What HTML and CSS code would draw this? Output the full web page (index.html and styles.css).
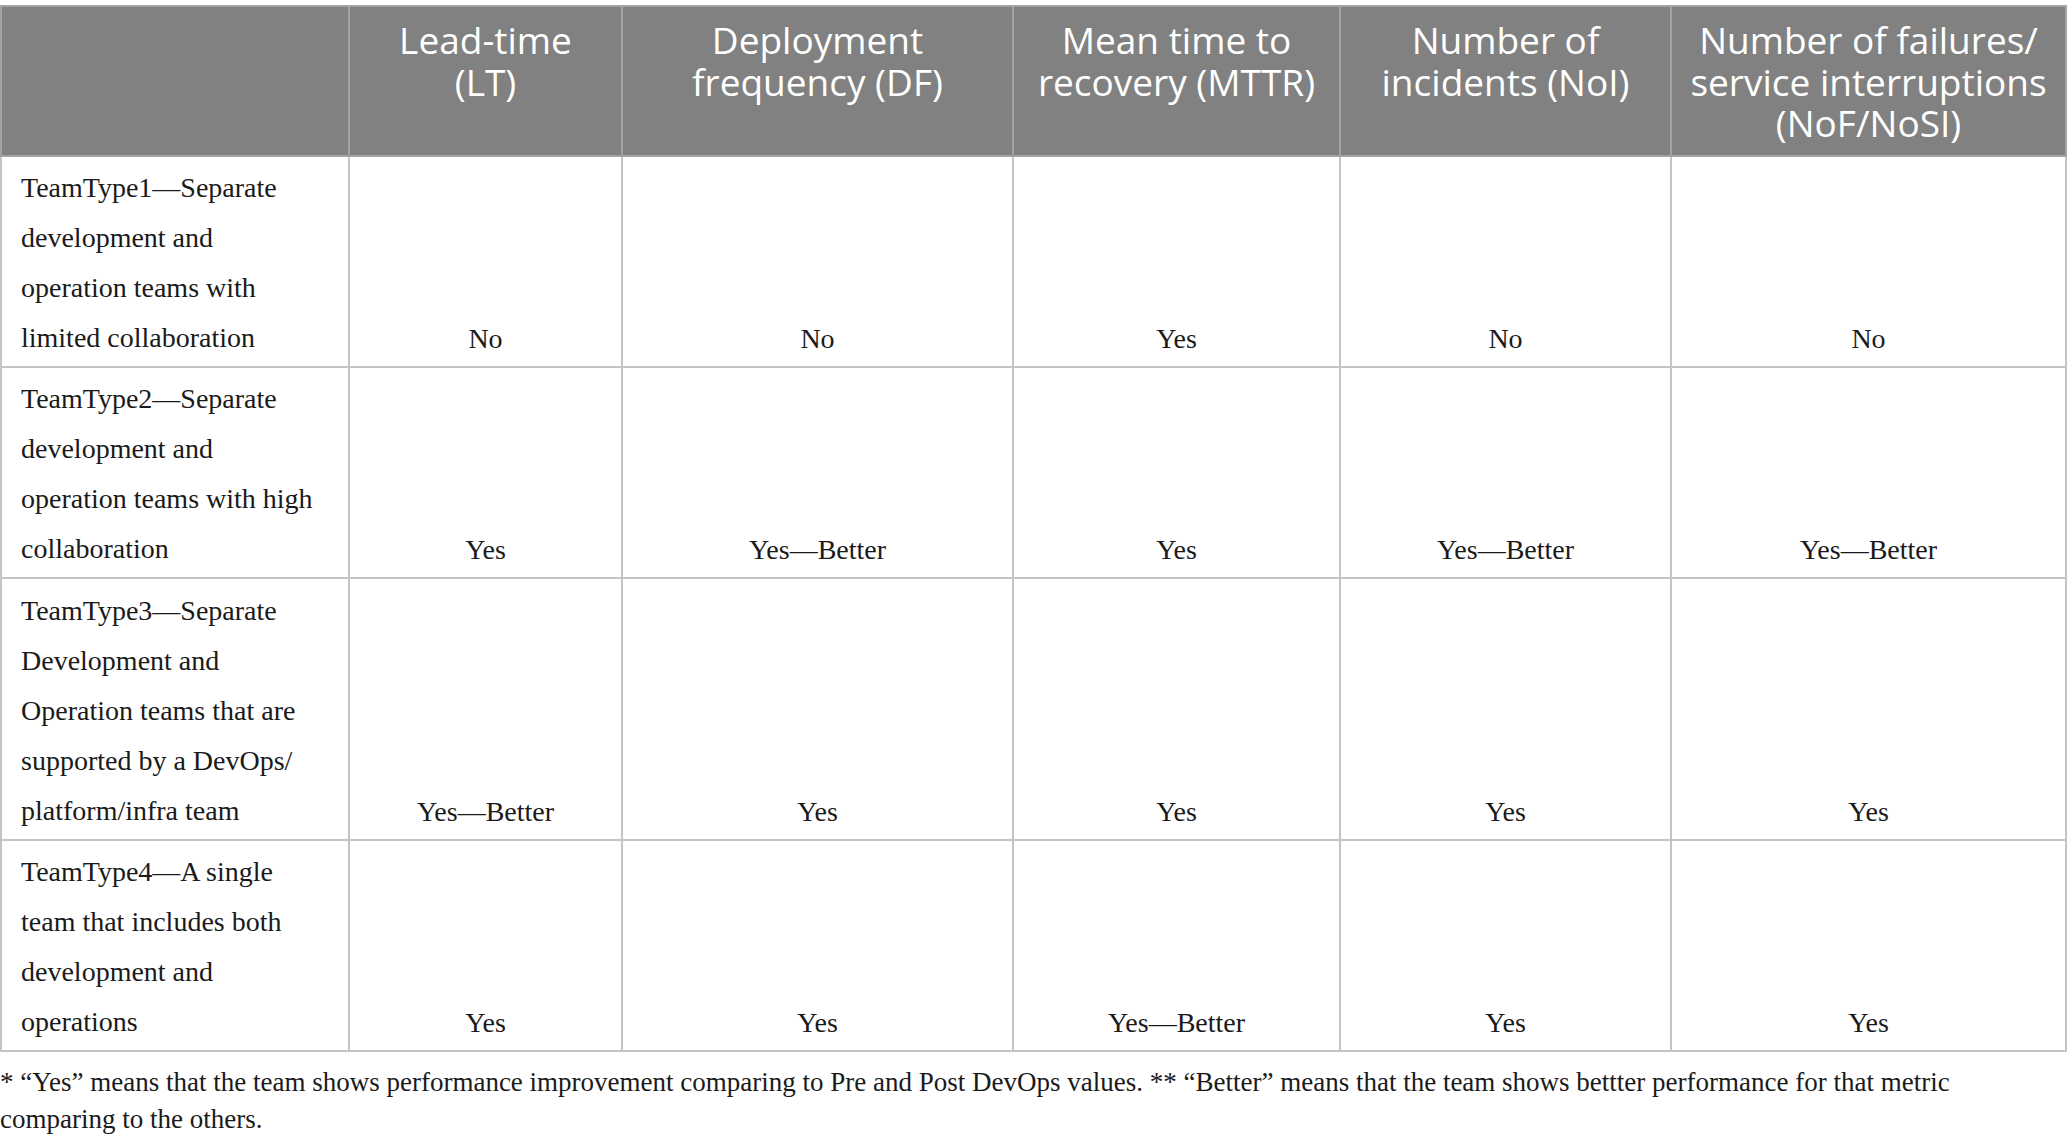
FILE: index.html
```html
<!DOCTYPE html>
<html lang="en">
<head>
  <meta charset="UTF-8" />
  <title>DevOps team types</title>
  <link rel="stylesheet" href="styles.css">
</head>
<body>
  <table class="results">
    <colgroup>
      <col class="c-team" />
      <col class="c-lt" />
      <col class="c-df" />
      <col class="c-mttr" />
      <col class="c-noi" />
      <col class="c-nof" />
    </colgroup>
    <thead>
      <tr>
        <th></th>
        <th>Lead-time<br>(LT)</th>
        <th>Deployment<br>frequency (DF)</th>
        <th>Mean time to<br>recovery (MTTR)</th>
        <th>Number of<br>incidents (NoI)</th>
        <th>Number of failures/<br>service interruptions<br>(NoF/NoSI)</th>
      </tr>
    </thead>
    <tbody>
      <tr>
        <td class="team">TeamType1—Separate<br>development and<br>operation teams with<br>limited collaboration</td>
        <td>No</td>
        <td>No</td>
        <td>Yes</td>
        <td>No</td>
        <td>No</td>
      </tr>
      <tr>
        <td class="team">TeamType2—Separate<br>development and<br>operation teams with high<br>collaboration</td>
        <td>Yes</td>
        <td>Yes—Better</td>
        <td>Yes</td>
        <td>Yes—Better</td>
        <td>Yes—Better</td>
      </tr>
      <tr class="tall">
        <td class="team">TeamType3—Separate<br>Development and<br>Operation teams that are<br>supported by a DevOps/<br>platform/infra team</td>
        <td>Yes—Better</td>
        <td>Yes</td>
        <td>Yes</td>
        <td>Yes</td>
        <td>Yes</td>
      </tr>
      <tr>
        <td class="team">TeamType4—A single<br>team that includes both<br>development and<br>operations</td>
        <td>Yes</td>
        <td>Yes</td>
        <td>Yes—Better</td>
        <td>Yes</td>
        <td>Yes</td>
      </tr>
    </tbody>
  </table>
  <p class="note">* “Yes” means that the team shows performance improvement comparing to Pre and Post DevOps values. ** “Better” means that the team shows bettter performance for that metric comparing to the others.</p>
</body>
</html>
```

FILE: styles.css
```css
body {
  margin: 0;
  padding: 5px 2px 0 0;
  background: #fff;
  color: #1a1a1a;
  font-family: 'Liberation Serif', serif;
}
.results {
  width: 2065px;
  border-collapse: collapse;
  table-layout: fixed;
}
.c-team { width: 348px; }
.c-lt { width: 273px; }
.c-df { width: 391px; }
.c-mttr { width: 327px; }
.c-noi { width: 331px; }
.c-nof { width: 395px; }
th, td {
  border: 2px solid #c4c4c4;
  white-space: nowrap;
}
th {
  height: 150px;
  box-sizing: border-box;
  background: #808180;
  color: #fff;
  font-family: 'Open Sans', sans-serif;
  font-weight: 400;
  font-size: 37px;
  line-height: 41.5px;
  vertical-align: top;
  text-align: center;
  padding: 12px 2px 0;
  border-color: #a3a3a3;
}
td {
  font-size: 28px;
  line-height: 50px;
  vertical-align: bottom;
  text-align: center;
  padding: 8px 6px 2px;
}
td.team {
  text-align: left;
  vertical-align: top;
  padding: 6px 0 3px 19px;
}
.tall td {
  padding-top: 8px;
}
.tall td.team {
  padding-top: 7px;
}
.note {
  margin: 12px 0 0;
  font-size: 27px;
  line-height: 37px;
}
```
